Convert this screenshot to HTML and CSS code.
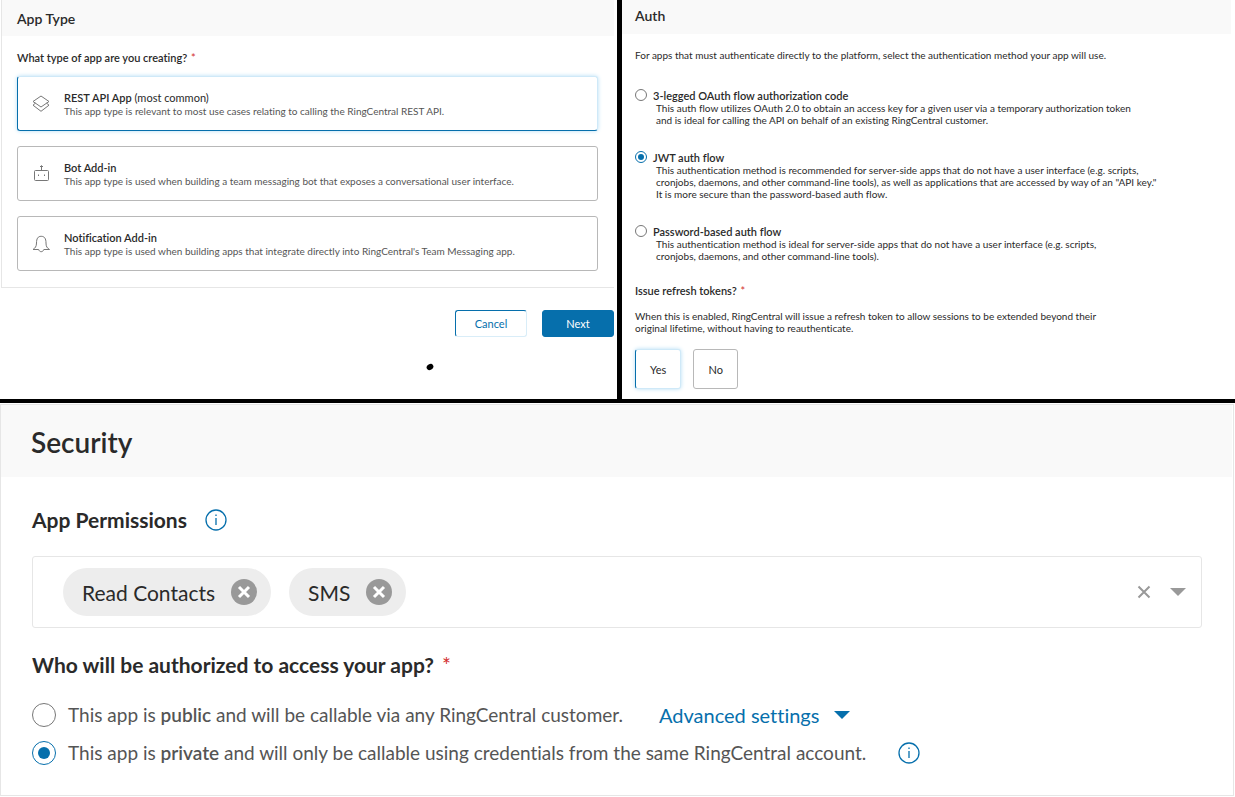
FILE: index.html
```html
<!DOCTYPE html>
<html lang="en">
<head>
<meta charset="utf-8">
<title>Create app</title>
<meta name="viewport" content="width=device-width, initial-scale=1">
<link rel="stylesheet" href="styles.css">
</head>
<body>
<main class="board">
  <div class="top">
    <section class="app-type">
      <div class="panel">
        <h2 class="panel-title">App Type</h2>
        <div class="panel-body">
          <h3 class="question">What type of app are you creating? <span class="required">*</span></h3>
          <div class="cards">
            <button type="button" class="card selected" aria-pressed="true">
              <svg class="card-icon" viewBox="0 0 18 18" aria-hidden="true"><path d="M9 1 17 6.500 9 12 1 6.500z"/><path d="M3.500 8.100 1 10.200 9 16.300l8-6.100-2.500-2.100"/></svg>
              <span class="card-text">
                <span class="card-name"><b>REST API App</b> (most common)</span>
                <span class="card-desc">This app type is relevant to most use cases relating to calling the RingCentral REST API.</span>
              </span>
            </button>
            <button type="button" class="card" aria-pressed="false">
              <svg class="card-icon" viewBox="0 0 18 18" aria-hidden="true"><rect x="2.500" y="5.500" width="14" height="10" rx="1"/><path d="M9.500 5.500V1M8 2l1.500-1.500L11 2M6.500 9.500v1.500M12.500 9.500v1.500"/></svg>
              <span class="card-text">
                <span class="card-name"><b>Bot Add-in</b></span>
                <span class="card-desc">This app type is used when building a team messaging bot that exposes a conversational user interface.</span>
              </span>
            </button>
            <button type="button" class="card" aria-pressed="false">
              <svg class="card-icon" viewBox="0 0 18 18" aria-hidden="true"><path d="M1 14.500c2.200-1.500 3.500-3 3.500-6.500C4.500 3.500 6 1.300 9.200 1.300S14 3.500 14 8c0 3.500 1 5 3.500 6.500h-5.700c-.4 1.300-1.300 2.200-2.600 2.200s-2.200-.9-2.500-2.200z"/></svg>
              <span class="card-text">
                <span class="card-name"><b>Notification Add-in</b></span>
                <span class="card-desc">This app type is used when building apps that integrate directly into RingCentral's Team Messaging app.</span>
              </span>
            </button>
          </div>
        </div>
      </div>
      <div class="actions">
        <button type="button" class="btn">Cancel</button>
        <button type="button" class="btn primary">Next</button>
      </div>
      <svg class="dot" viewBox="0 0 8 8" aria-hidden="true"><ellipse cx="4" cy="4" rx="3.500" ry="2.800" transform="rotate(-30 4 4)"/></svg>
    </section>

    <section class="auth">
      <h2 class="auth-title">Auth</h2>
      <div class="auth-body">
        <p class="intro">For apps that must authenticate directly to the platform, select the authentication method your app will use.</p>
        <div class="methods">
          <div class="method">
            <input class="radio" type="radio" name="auth" id="auth-oauth">
            <div>
              <label class="method-name" for="auth-oauth">3-legged OAuth flow authorization code</label>
              <p class="method-desc">This auth flow utilizes OAuth 2.0 to obtain an access key for a given user via a temporary authorization token<br>and is ideal for calling the API on behalf of an existing RingCentral customer.</p>
            </div>
          </div>
          <div class="method">
            <input class="radio" type="radio" name="auth" id="auth-jwt" checked>
            <div>
              <label class="method-name" for="auth-jwt">JWT auth flow</label>
              <p class="method-desc">This authentication method is recommended for server-side apps that do not have a user interface (e.g. scripts,<br>cronjobs, daemons, and other command-line tools), as well as applications that are accessed by way of an "API key."<br>It is more secure than the password-based auth flow.</p>
            </div>
          </div>
          <div class="method">
            <input class="radio" type="radio" name="auth" id="auth-password">
            <div>
              <label class="method-name" for="auth-password">Password-based auth flow</label>
              <p class="method-desc">This authentication method is ideal for server-side apps that do not have a user interface (e.g. scripts,<br>cronjobs, daemons, and other command-line tools).</p>
            </div>
          </div>
        </div>
        <h3 class="question">Issue refresh tokens? <span class="required">*</span></h3>
        <p class="refresh-desc">When this is enabled, RingCentral will issue a refresh token to allow sessions to be extended beyond their<br>original lifetime, without having to reauthenticate.</p>
        <div class="choices">
          <button type="button" class="choice selected" aria-pressed="true">Yes</button>
          <button type="button" class="choice" aria-pressed="false">No</button>
        </div>
      </div>
    </section>
  </div>

  <section class="security">
    <h2 class="security-title">Security</h2>
    <div class="security-body">
      <h3 class="heading">App Permissions
        <svg class="info" viewBox="0 0 22 22" role="img" aria-label="Info"><circle cx="11" cy="11" r="10"/><path d="M11 9v7M11 5.500v1.500"/></svg>
      </h3>
      <div class="select">
        <div class="chips">
          <span class="chip">Read Contacts
            <button type="button" class="remove" aria-label="Remove Read Contacts"><svg viewBox="0 0 26 26"><circle cx="13" cy="13" r="13"/><path d="m8 8 10 10M18 8 8 18"/></svg></button>
          </span>
          <span class="chip">SMS
            <button type="button" class="remove" aria-label="Remove SMS"><svg viewBox="0 0 26 26"><circle cx="13" cy="13" r="13"/><path d="m8 8 10 10M18 8 8 18"/></svg></button>
          </span>
        </div>
        <button type="button" class="tool" aria-label="Clear all"><svg class="clear" viewBox="0 0 14 14"><path d="m1.500 1.500 11 11M12.500 1.500l-11 11"/></svg></button>
        <button type="button" class="tool" aria-label="Open list"><svg class="caret" viewBox="0 0 16 8"><path d="M0 0h16L8 8z"/></svg></button>
      </div>
      <h3 class="heading">Who will be authorized to access your app? <span class="required">*</span></h3>
      <div class="access">
        <div class="access-row">
          <input class="radio large" type="radio" name="access" id="access-public">
          <label for="access-public">This app is <b>public</b> and will be callable via any RingCentral customer.</label>
          <a class="advanced" href="#">Advanced settings <svg class="caret" viewBox="0 0 16 8" aria-hidden="true"><path d="M0 0h16L8 8z"/></svg></a>
        </div>
        <div class="access-row">
          <input class="radio large" type="radio" name="access" id="access-private" checked>
          <label for="access-private">This app is <b>private</b> and will only be callable using credentials from the same RingCentral account.</label>
          <svg class="info" viewBox="0 0 22 22" role="img" aria-label="Info"><circle cx="11" cy="11" r="10"/><path d="M11 9v7M11 5.500v1.500"/></svg>
        </div>
      </div>
    </div>
  </section>
</main>
</body>
</html>
```
FILE: styles.css
```css
* { box-sizing: border-box; }

body {
  margin: 0;
  background: #fff;
  color: #2a2a2a;
  font-family: Lato, "Liberation Sans", sans-serif;
  font-size: 10px;
  font-variant-ligatures: none;
}

h2, h3, p { margin: 0; }

button {
  font: inherit;
  color: inherit;
  background: #fff;
  cursor: pointer;
}

svg { display: block; flex: none; }

.top {
  display: grid;
  grid-template-columns: 617fr 618fr;
  border-bottom: 4px solid #000;
}

.panel {
  margin-right: 3px;
  border-left: 1px solid #e6e6e6;
  border-bottom: 1px solid #e6e6e6;
  margin-left: 1px;
}

.panel-title,
.auth-title {
  background: #f9f9f9;
  font-size: 14px;
  font-weight: 600;
  line-height: 20px;
}

.panel-title { padding: 9px 15px 7px; }
.panel-body { padding: 14px 16px 16px 15px; }

.question {
  font-size: 11px;
  font-weight: 600;
  line-height: 16px;
}

.required { color: #d32f2f; font-weight: 400; margin-left: 1px; }

.cards {
  display: grid;
  gap: 15px;
  margin-top: 10px;
}

.card {
  display: flex;
  align-items: center;
  gap: 14px;
  min-height: 55px;
  padding: 0 14px;
  border: 1px solid #b8b8b8;
  border-radius: 3px;
  text-align: left;
}

.selected {
  border-color: #066fac;
  border-top-color: #cfe9f8;
  border-right-color: #cfe9f8;
  box-shadow: 0 0 4px #b5def5;
}

.card-icon {
  width: 18px;
  height: 18px;
  fill: none;
  stroke: #777;
}

.card-text { display: grid; padding-top: 2px; }
.card-name { font-size: 11px; line-height: 14px; }
.card-name b { font-weight: 600; }
.card-desc { line-height: 13px; color: #555; }

.actions {
  display: flex;
  justify-content: flex-end;
  gap: 15px;
  padding: 22px 3px 0;
}

.btn {
  width: 72px;
  height: 27px;
  border: 1px solid #066fac;
  border-right-color: #d9edf8;
  border-bottom-color: #d9edf8;
  border-radius: 3px;
  color: #066fac;
  font-size: 11px;
}

.btn.primary { border-color: #066fac; background: #066fac; color: #fff; }

.dot { width: 8px; height: 8px; margin: 26px auto 0 426px; }

.auth {
  padding-right: 4px;
  border-left: 5px solid #000;
}

.auth-title { padding: 6px 13px 8px; }
.auth-body { padding: 15px 13px 10px; }
.intro { line-height: 12px; }

.methods {
  display: grid;
  gap: 25px;
  margin: 28px 0 21px;
}

.method {
  display: grid;
  grid-template-columns: 12px 1fr;
  column-gap: 6px;
}

.method-name { display: block; font-size: 11px; font-weight: 600; line-height: 13px; }
.method-desc { padding-left: 3px; line-height: 12px; }

.radio {
  appearance: none;
  display: grid;
  place-items: center;
  flex: none;
  width: 12px;
  height: 12px;
  margin: 0;
  border: 1px solid #777;
  border-radius: 50%;
  background: #fff;
}

.radio:checked { border-color: #066fac; }

.radio:checked::before {
  content: "";
  width: 6px;
  height: 6px;
  border-radius: 50%;
  background: #066fac;
}

.radio.large { width: 24px; height: 24px; }
.radio.large:checked::before { width: 12px; height: 12px; }

.refresh-desc { margin-top: 11px; line-height: 12px; }

.choices { display: flex; gap: 12px; margin-top: 15px; }

.choice {
  min-width: 45px;
  height: 40px;
  padding: 0 14px;
  border: 1px solid #b8b8b8;
  border-radius: 3px;
  font-size: 11px;
}

.choice.selected {
  border-color: #cfe9f8;
  border-left-color: #066fac;
}

.security {
  margin: 1px 1px 0 0;
  border: 1px solid #e6e6e6;
}

.security-title {
  margin-right: 1px;
  padding: 21px 30px 19px;
  background: #f9f9f9;
  font-size: 28px;
  font-weight: 600;
  line-height: 32px;
}

.security-body { padding: 30px 31px 29px; }

.heading {
  display: flex;
  align-items: center;
  font-size: 21px;
  font-weight: 700;
  line-height: 26px;
}

.heading .info { margin-left: 18px; }
.heading .required { margin-left: 8px; }

.info {
  width: 22px;
  height: 22px;
  fill: none;
  stroke: #066fac;
  stroke-width: 1.3;
}

.select {
  display: flex;
  align-items: center;
  gap: 19px;
  margin: 23px 0 24px;
  padding: 11px 15px 11px 30px;
  border: 1px solid #e6e6e6;
  border-radius: 3px;
}

.chips { display: flex; flex: 1; gap: 18px; }

.chip {
  display: flex;
  align-items: center;
  gap: 16px;
  height: 48px;
  padding: 0 14px 0 19px;
  border-radius: 24px;
  background: #ededed;
  font-size: 21px;
}

.remove, .tool { padding: 0; border: 0; background: none; }
.remove svg { width: 26px; height: 26px; fill: #999; }
.remove path { stroke: #fff; stroke-width: 3; }
.clear { width: 14px; height: 14px; stroke: #999; stroke-width: 2; }
.caret { width: 16px; height: 8px; fill: #999; }

.access { display: grid; gap: 12px; margin-top: 24px; }

.access-row {
  display: flex;
  align-items: center;
  gap: 12px;
  color: #555;
  font-size: 19px;
  line-height: 26px;
}

.access-row b { font-weight: 600; }
.access-row .info { margin-left: 20px; }

.advanced {
  display: flex;
  align-items: center;
  gap: 15px;
  margin-left: 24px;
  color: #066fac;
  font-size: 20px;
  text-decoration: none;
}

.advanced .caret { fill: #066fac; }
```
